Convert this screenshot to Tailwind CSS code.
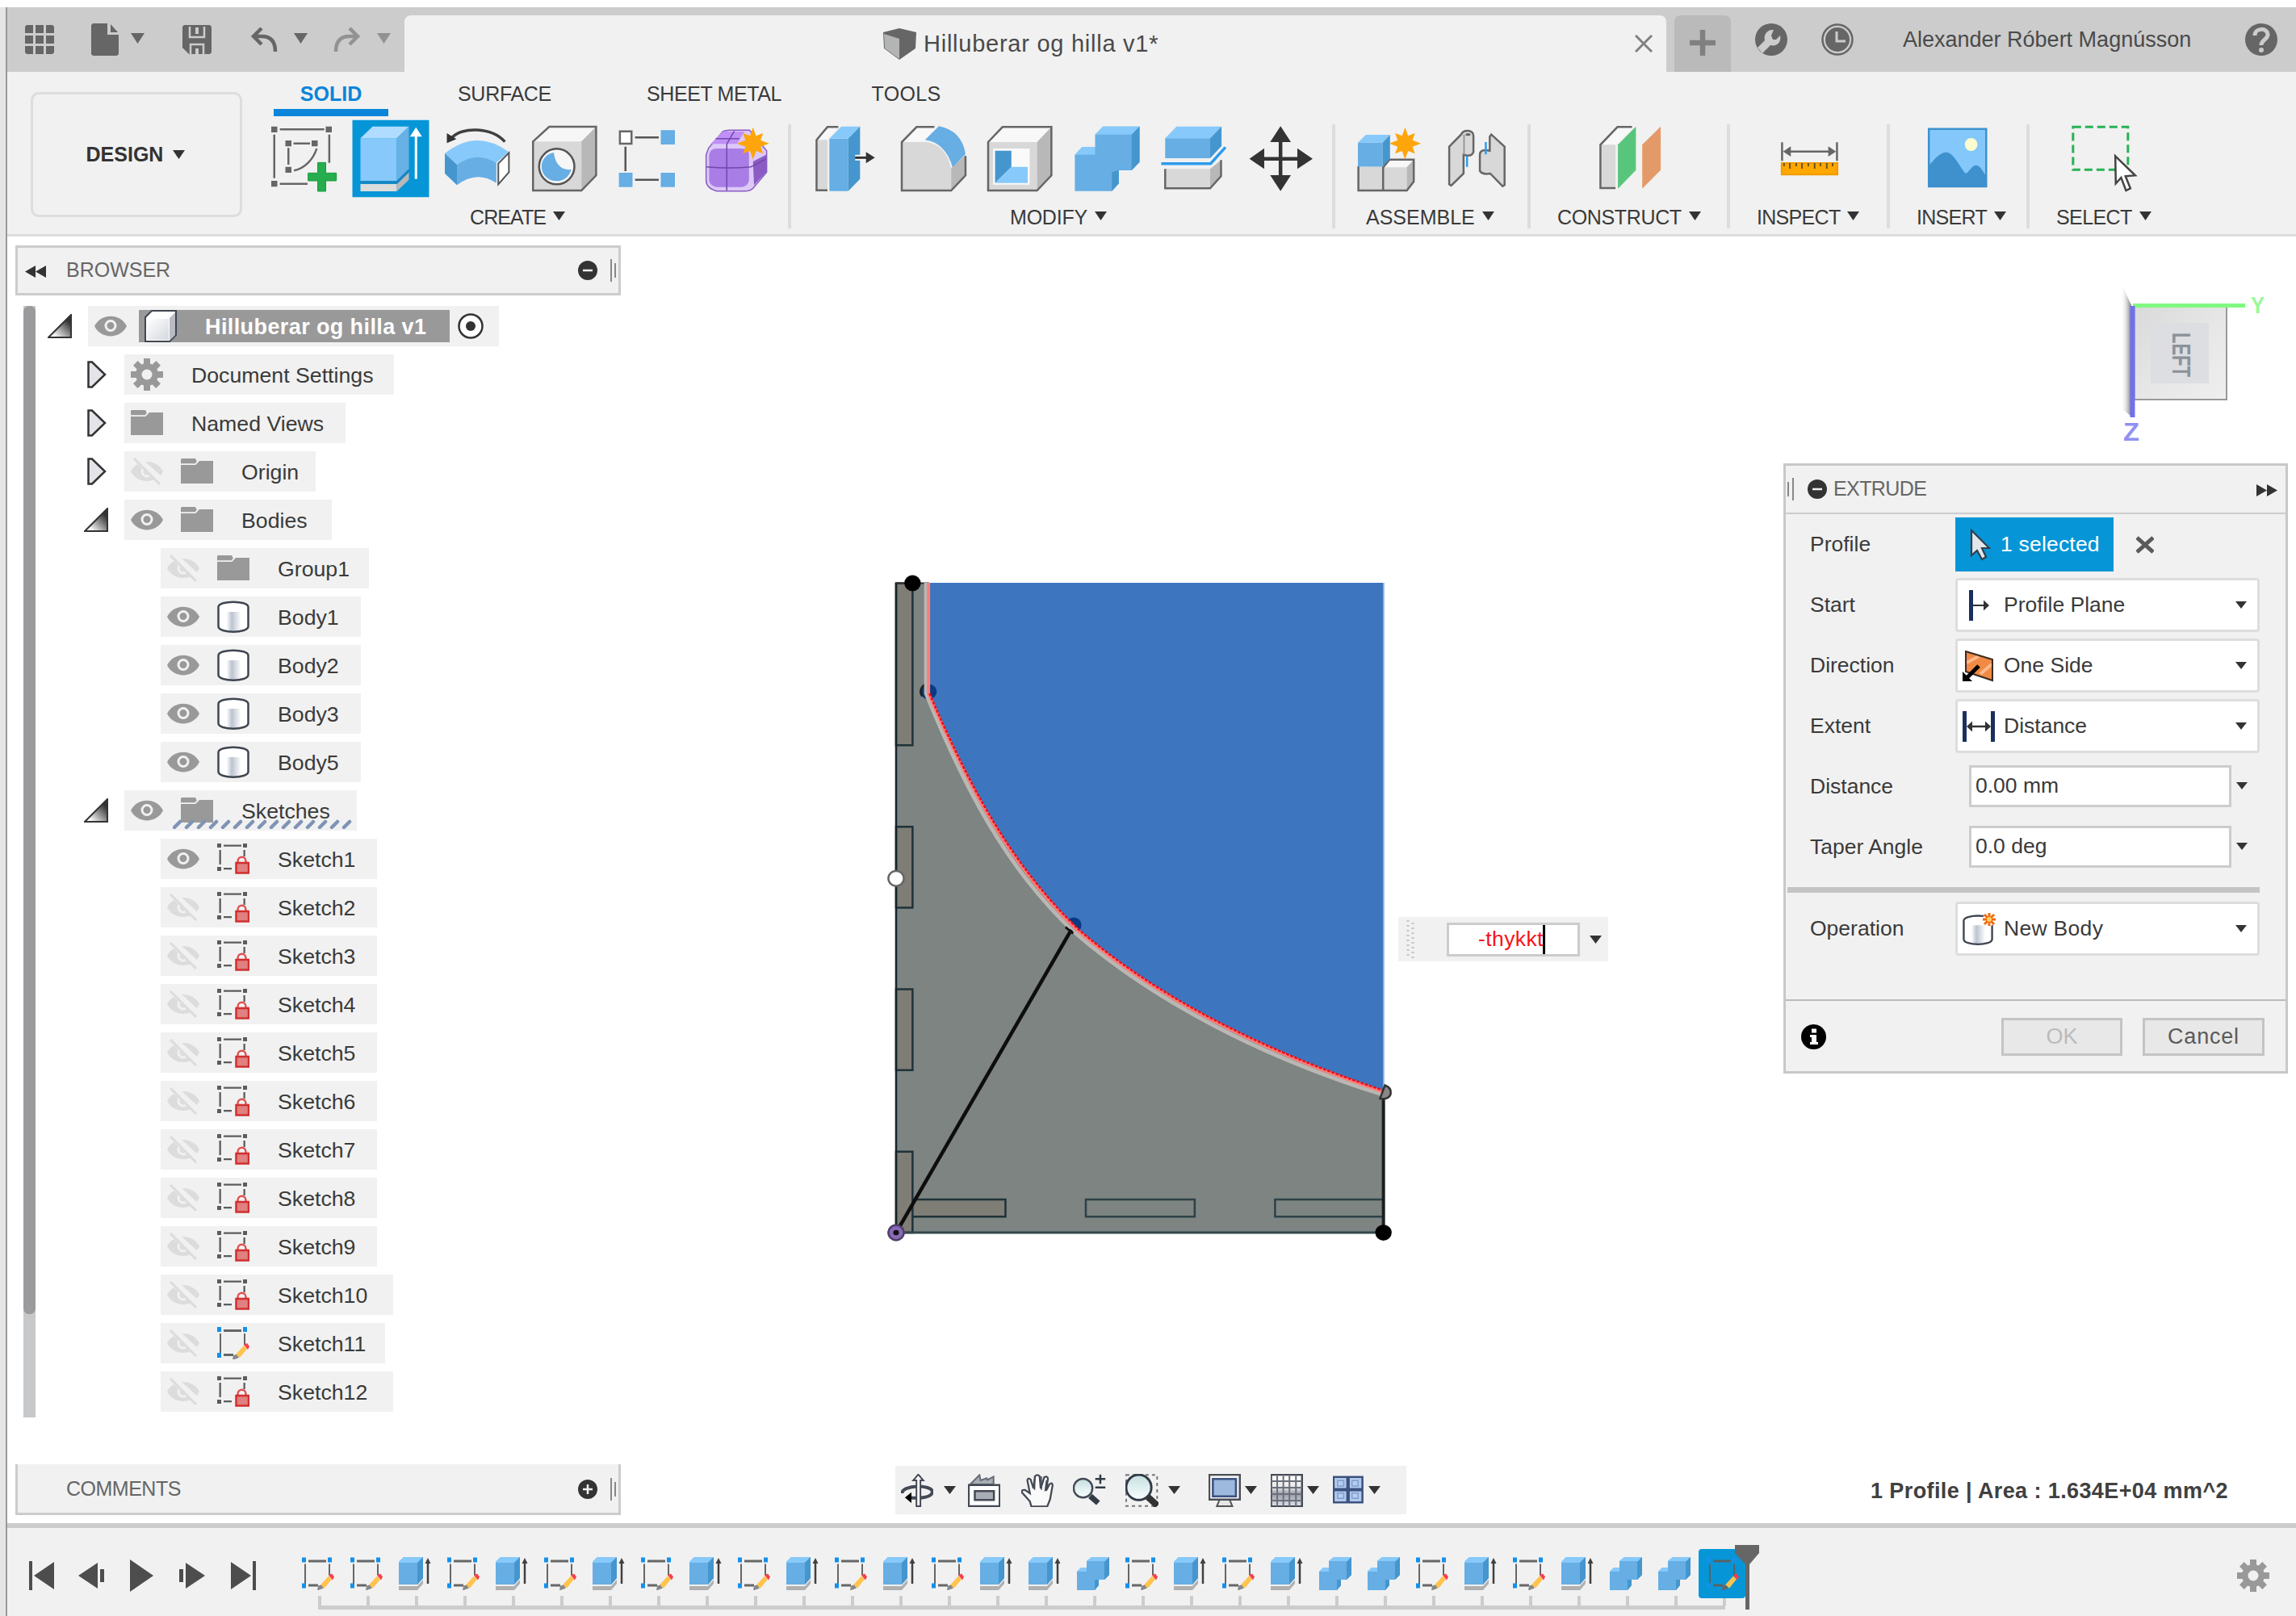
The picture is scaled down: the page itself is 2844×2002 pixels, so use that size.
<!DOCTYPE html>
<html lang="en">
<head>
<meta charset="utf-8">
<title>Hilluberar og hilla v1*</title>
<script src="https://cdn.jsdelivr.net/npm/@tailwindcss/browser@4"></script>
</head>
<body class="w-[2844px] h-[2002px] overflow-hidden bg-white font-['Liberation_Sans',Arial,sans-serif] text-[#3a3a3a] pt-[9px] flex">

<!-- Shared symbols -->
<svg class="absolute w-0 h-0" aria-hidden="true">
  <defs>
    <linearGradient id="gTri" x1="0" y1="1" x2="1" y2="0"><stop offset="0.15" stop-color="#fff"/><stop offset="0.8" stop-color="#333"/></linearGradient>
    <linearGradient id="gCyl"><stop offset="0" stop-color="#fff"/><stop offset=".1" stop-color="#fff"/><stop offset=".35" stop-color="#bcc3d0"/><stop offset=".8" stop-color="#fff"/></linearGradient>
    <linearGradient id="gCube" x1="0" y1="0" x2="1" y2="1"><stop offset="0" stop-color="#fff"/><stop offset="1" stop-color="#d5d8de"/></linearGradient>
    <linearGradient id="gLens" x1="0" y1="0" x2="0" y2="1"><stop offset="0" stop-color="#c5dfe0"/><stop offset="1" stop-color="#fafefe"/></linearGradient>
    <linearGradient id="gGrid" x1="0" y1="0" x2="0" y2="1"><stop offset="0" stop-color="#fff"/><stop offset=".4" stop-color="#e8e8e8"/><stop offset=".6" stop-color="#9a9da8"/><stop offset="1" stop-color="#dfe3ee"/></linearGradient>
    <linearGradient id="gShade"><stop offset="0" stop-color="#fff" stop-opacity="0"/><stop offset="1" stop-color="#7c7c7c"/></linearGradient>
    <linearGradient id="gView" x1="0" y1="0" x2="1" y2="1"><stop offset="0" stop-color="#d9d9d9"/><stop offset=".5" stop-color="#e6e6e6"/><stop offset="1" stop-color="#efefef"/></linearGradient>
  </defs>
  <symbol id="caret" viewBox="0 0 15 11" preserveAspectRatio="none"><path d="M0 0h15L7.500 11z" fill="currentColor"/></symbol>
  <symbol id="eye" viewBox="0 0 40 26"><path d="M0 13C8-3.500 32-3.500 40 13C32 29.500 8 29.500 0 13z" fill="#999"/><circle cx="20" cy="12.500" r="6" fill="#999" stroke="#f1f1f1" stroke-width="3"/></symbol>
  <symbol id="eyeoff" viewBox="0 0 40 34"><path d="M0 17C8 1 32 1 40 17C32 33 8 33 0 17z" fill="#dcdcdc"/><circle cx="20" cy="17" r="6" fill="#dcdcdc" stroke="#f1f1f1" stroke-width="3"/><path d="M6 0L40 31" stroke="#f1f1f1" stroke-width="9"/><path d="M4 1L36 33" stroke="#dcdcdc" stroke-width="3"/></symbol>
  <symbol id="folder" viewBox="0 0 40 34"><path d="M1 1h17l2 4-2 3H0V2z" fill="#999"/><path d="M0 9h18l5-5h17v28H0z" fill="#999"/><path d="M0 8h18l5-6" stroke="#f1f1f1" stroke-width="1.500" fill="none"/></symbol>
  <symbol id="gear" viewBox="-20 -20 40 40"><g fill="#999"><circle r="14"/><g id="teeth"><rect x="-4" y="-20" width="8" height="40"/><rect x="-20" y="-4" width="40" height="8"/></g><use href="#teeth" transform="rotate(45)"/></g><circle r="6.500" fill="#f1f1f1"/></symbol>
  <symbol id="cyl" viewBox="0 0 40 40"><path d="M1.500 8C1.500-.5 38.500-.5 38.500 8V32C38.500 41 1.500 41 1.500 32z" fill="#fff"/><path d="M9 14h26v22C28 39 15 39 9 36z" fill="url(#gCyl)"/><path d="M1.500 8C1.500-.5 38.500-.5 38.500 8V32C38.500 41 1.500 41 1.500 32z" fill="none" stroke="#3f4650" stroke-width="2.500"/></symbol>
  <symbol id="cube" viewBox="0 0 40 40"><path d="M1 9L9 1H39V31L31 39H1z" fill="#fff" stroke="#3f4650" stroke-width="2"/><path d="M3 11H30V37H3z" fill="url(#gCube)"/><path d="M31 10L38 3V31L31 38z" fill="#b9bcc4"/></symbol>
  <symbol id="sklock" viewBox="0 0 40 38"><g fill="#5c5c5c"><path d="M0 0h5v5H0zM32 0h5v5h-5zM0 29h5v5H0zM8 1.500h22v2.300H8zM2.500 8h2.300v18H2.500zM32.500 8h2.300v8h-2.300zM8 30h10v2.300H8z"/></g><path d="M25.500 25v-3c0-7 10-7 10 0v3" fill="none" stroke="#e05050" stroke-width="2.500"/><rect x="23.500" y="24" width="15.500" height="12.500" fill="#e08080" stroke="#d22f2f" stroke-width="2.500"/></symbol>
  <symbol id="sketch" viewBox="0 0 40 40"><path d="M8 3h22v3H8zM3 8h2v25H3zM33 8h2v14h-2zM8 33h12v3H8z" fill="#666"/><path d="M0 0h5v6H0zM32 0h5v6h-5zM0 32h5v6H0z" fill="#1490ea"/><path d="M23 34L33 23l4 4L28 38z" fill="#ffc34e"/><path d="M33 22l4-2 3 4-2 4z" fill="#f5404a"/><path d="M19 41l1-6 4-1 3 4z" fill="#888"/></symbol>
  <symbol id="sketchsel" viewBox="0 0 40 40"><path d="M8 3h22v3H8zM3 8h2v25H3zM33 8h2v14h-2zM8 33h12v3H8z" fill="#5a6266"/><path d="M0 0h5v6H0zM32 0h5v6h-5zM0 32h5v6H0z" fill="#1490ea"/><path d="M23 34L33 23l4 4L28 38z" fill="#ffc34e"/><path d="M33 22l4-2 3 4-2 4z" fill="#f5404a"/><path d="M19 41l1-6 4-1 3 4z" fill="#666"/></symbol>
  <symbol id="extrude" viewBox="0 0 40 41"><path d="M0 36h23l7-8v5l-7 8H0z" fill="#b0b0b0"/><path d="M0 6L6 0H30V26L23 34H0z" fill="#66aee4"/><path d="M0 6L6 0H30L23 7H0z" fill="#87c9fa"/><path d="M23 7L30 0V26L23 34z" fill="#4596ce"/><path d="M36 33V5" stroke="#404040" stroke-width="2.500"/><path d="M32.500 8L36 1l3.500 7z" fill="#404040"/></symbol>
  <symbol id="combine" viewBox="0 0 40 41"><path d="M0 18L5 13H12V5L18 0H40V22L34 28H27V35L22 41H0z" fill="#66aee4"/><path d="M0 18L5 13H12V18zM12 5L18 0H40L35 5z" fill="#87c9fa"/><path d="M35 5L40 0V22L34 28V6zM22 28H27V35L22 41z" fill="#4596ce"/></symbol>
  <symbol id="open" viewBox="0 0 30 30"><path d="M1 29L29 1V29z" fill="url(#gTri)" stroke="#333" stroke-width="2"/></symbol>
  <symbol id="closed" viewBox="0 0 24 34"><path d="M1.500 1.500H6L22 17L6 32.500H1.500z" fill="#e4e4e8" stroke="#333" stroke-width="2.500"/></symbol>
  <symbol id="star" viewBox="-32 -60 64 120" overflow="visible"><path d="M0-60L6-28 20-38 15-12 32 0 15 12 20 38 6 28 0 60-6 28-20 38-15 12-32 0-15-12-20-38-6-28z" fill="#fda50a"/></symbol>
</svg>

<!-- Window edge -->
<div class="w-[9px] h-full shrink-0 bg-[#e5e5e5] border-r-2 border-[#999]"></div>

<div class="w-[2835px] h-[1993px] flex flex-col">

  <!-- Title bar -->
  <header class="h-20 shrink-0 bg-[#ccc] flex text-[#666]">
    <div class="w-[492px] flex items-center pl-[22px]">
      <svg class="w-9 h-9" viewBox="0 0 36 36" fill="currentColor"><path d="M2 0h8v10H0V2zM13 0h10v10H13zM26 0h8l2 2v8H26zM0 13h10v10H0zM13 13h10v10H13zM26 13h10v10H26zM0 26h10v10H2l-2-2zM13 26h10v10H13zM26 26h10v8l-2 2h-8z"/></svg>
      <svg class="w-[34px] h-10 ml-[46px]" viewBox="0 0 34 40" fill="currentColor"><path d="M2 0H20V14H34V38L32 40H2L0 38V2zM24 1L33 11H24z"/></svg>
      <svg class="w-[17px] h-[13px] ml-[15px] -mt-1"><use href="#caret"/></svg>
      <svg class="w-9 h-9 ml-[47px]" viewBox="0 0 36 36"><path d="M2 0H34L36 2V34L34 36H8L0 28V2z" fill="#666"/><path d="M9 2v13h18V2M10 36V24H26V36" fill="none" stroke="#ccc" stroke-width="2.500"/><path d="M16 29h4v7h-4zM16 3h4v8h-4z" fill="#ccc"/></svg>
      <svg class="w-[34px] h-[30px] ml-12" viewBox="0 0 34 30"><path d="M14 1L4 11L14 21M4 11H14C26 11 31 18 31 30" fill="none" stroke="#666" stroke-width="4.500"/></svg>
      <svg class="w-[17px] h-[13px] ml-5 -mt-1"><use href="#caret"/></svg>
      <svg class="w-[34px] h-[30px] ml-8" viewBox="0 0 34 30"><path d="M20 1L30 11L20 21M30 11H20C8 11 3 18 3 30" fill="none" stroke="#929292" stroke-width="4.500"/></svg>
      <svg class="w-[17px] h-[13px] ml-5 -mt-1 text-[#929292]"><use href="#caret"/></svg>
    </div>
    <div class="w-[1563px] mt-[10px] rounded-t-[8px] bg-[#f1f1f1] flex items-center">
      <svg class="w-[41px] h-[39px] ml-[593px]" viewBox="0 0 41 39"><path d="M0 5L20 0L41 5L40 25L20 39L1 25z" fill="#666"/><path d="M1 7L20 13V38L2 25z" fill="#b3b5b5"/></svg>
      <span class="ml-[9px] mt-[2px] text-[29px] tracking-[0.75px] text-[#4a4a4a] whitespace-nowrap w-[300px]">Hilluberar og hilla v1*</span>
      <svg class="w-[22px] h-[22px] ml-[581px]" viewBox="0 0 22 22"><path d="M1 1L21 21M21 1L1 21" stroke="#808080" stroke-width="3"/></svg>
    </div>
    <div class="w-[70px] ml-[10px] mt-[10px] rounded-t-[8px] bg-[#bababa] flex items-center justify-center">
      <svg class="w-8 h-8 -mt-[2px]" viewBox="0 0 32 32"><path d="M16 0V32M0 16H32" stroke="#808080" stroke-width="6.500"/></svg>
    </div>
    <div class="flex items-center">
      <svg class="w-10 h-10 ml-[30px]" viewBox="0 0 40 40"><circle cx="20" cy="20" r="20" fill="#666"/><path d="M3 30L12 21C10 13 16 7 23 8L20 15L22 20L26 20L31 15C33 23 27 29 19 27L9 37z" fill="#ccc"/></svg>
      <svg class="w-10 h-10 ml-[42px]" viewBox="0 0 40 40"><circle cx="20" cy="20" r="18.500" fill="none" stroke="#666" stroke-width="2.500"/><circle cx="20" cy="20" r="15" fill="#666"/><path d="M19 10V22H30" fill="none" stroke="#ccc" stroke-width="3"/></svg>
      <span class="ml-[61px] text-[27px] text-[#4a4a4a] whitespace-nowrap w-[363px]">Alexander Róbert Magnússon</span>
      <svg class="w-10 h-10 ml-[61px]" viewBox="0 0 40 40"><circle cx="20" cy="20" r="20" fill="#666"/><path d="M12 15C12 5 28 5 28 14C28 20 20 20 20 27" fill="none" stroke="#ccc" stroke-width="5"/><circle cx="20" cy="33" r="3" fill="#ccc"/></svg>
    </div>
  </header>

  <!-- Ribbon -->
  <section class="h-[204px] shrink-0 bg-[#f1f1f1] border-b-[3px] border-[#ddd] flex">
    <div class="ml-[29px] mt-[25px] w-[262px] h-[155px] rounded-[10px] border-[3px] border-[#ddd] flex items-center justify-center text-[#333]">
      <span class="text-[25px] font-bold -ml-[2px]">DESIGN</span>
      <svg class="w-[15px] h-[11px] ml-[12px]"><use href="#caret"/></svg>
    </div>
    <div class="flex-1 flex flex-col">
      <nav class="flex h-[55px] text-[25px] leading-[36px] text-center">
        <div class="w-[142px] ml-[39px] pt-[9px] border-b-[9px] border-[#0a85d9] text-[#0a85d9] font-bold">SOLID</div>
        <div class="w-[180px] ml-[54px] pt-[9px] tracking-[-0.3px]">SURFACE</div>
        <div class="w-[201px] ml-[69px] pt-[9px] tracking-[-0.4px]">SHEET METAL</div>
        <div class="w-[141px] ml-[67px] pt-[9px] tracking-[0.3px]">TOOLS</div>
      </nav>
      <div class="flex mt-[10px] h-[129px] text-[25px] [&_svg_*]:[vector-effect:non-scaling-stroke]">

        <div class="w-[680px] border-r-4 border-[#ddd] pt-[2px]">
          <div class="flex gap-[27.5px] pl-9">
            <svg class="w-20 h-[81px] overflow-visible" viewBox="538 468 128 243" preserveAspectRatio="none" fill="none" stroke="#666" stroke-width="2.500"><path d="M555 481H643M544 500V662M653 500V605M555 683H610M582 533H615M572 550V612M628 552C622 590 605 625 583 634"/><path d="M538 470h12v22h-12zM646 470h12v22h-12zM566 522h12v22h-12zM618 522h12v22h-12zM566 620h12v22h-12zM538 672h12v22h-12z" fill="#666" stroke="none"/><path d="M630 604h16v39h21v29h-21v39h-16v-39h-19v-29h19z" fill="#25ad4e" stroke="#1d9a42" stroke-width="1"/></svg>
            <svg class="w-20 h-[81px] overflow-visible" viewBox="710 468 128 243" preserveAspectRatio="none"><path d="M698 446h152v287H698z" fill="#0696d7"/><path d="M714 514h72v158h-72z" fill="#87c9fa"/><path d="M714 514L738 470H810L786 514z" fill="#afdcff"/><path d="M786 514L810 470V628L786 672z" fill="#69b0e5"/><path d="M714 684h72v27h-72z" fill="#dcdcdc"/><path d="M786 684L810 640V668L786 711z" fill="#b8b8b8"/><path d="M714 678H786L810 634" fill="none" stroke="#1a84c0" stroke-width="3"/><path d="M824 500V665" stroke="#fff" stroke-width="3"/><path d="M824 473L836 508H812z" fill="#fff"/></svg>
            <svg class="w-20 h-[81px] overflow-visible" viewBox="882 468 128 243" preserveAspectRatio="none"><path d="M1001 527C975 472 915 470 896 512" fill="none" stroke="#404040" stroke-width="3.500"/><path d="M886 532L886 495L905 517z" fill="#333"/><path d="M882 570Q945 476 1009 565L984 605Q945 562 906 612z" fill="#87c9fa"/><path d="M906 612Q945 560 984 605V680Q945 632 906 688z" fill="#66aee4"/><path d="M882 570L906 612V688L882 645z" fill="#4596ce"/><path d="M1009 568V640L988 685V608z" fill="#fff" stroke="#555" stroke-width="2"/></svg>
            <svg class="w-20 h-[81px] overflow-visible" viewBox="1054 468 128 243" preserveAspectRatio="none"><path d="M1056 526L1088 471H1181L1152 526z" fill="#f6f6f6"/><path d="M1056 526h96v182h-96z" fill="#d8d8d8"/><path d="M1152 526L1181 471V652L1152 708z" fill="#b8b8b8"/><path d="M1056 526L1088 471H1181V652L1152 708H1056z" fill="none" stroke="#666" stroke-width="2.500"/><ellipse cx="1103" cy="619" rx="35" ry="66" fill="#f6f6f6" stroke="#555" stroke-width="2.500"/><path d="M1097 567C1100 610 1112 634 1132 630C1127 660 1115 673 1103 673C1085 673 1073 650 1073 619C1073 590 1085 570 1097 567z" fill="#66aee4"/></svg>
            <svg class="w-20 h-[81px] overflow-visible" viewBox="1226 468 128 243" preserveAspectRatio="none"><path d="M1229 488h23v46h-23z" fill="#fff" stroke="#666" stroke-width="2.500"/><path d="M1310 484h28v53h-28zM1227 642h27v53h-27zM1310 642h28v53h-28z" fill="#66aee4"/><path d="M1259 511H1306M1240 545V636M1259 668H1306" stroke="#555" stroke-width="2.500"/></svg>
            <svg class="w-20 h-[81px] overflow-visible" viewBox="1398 468 128 243" preserveAspectRatio="none"><path d="M1399 575L1404 550L1432 489Q1437 484 1445 484H1485L1519 560V640L1492 700Q1487 710 1478 710H1420Q1399 700 1399 670z" fill="#dcc8f7" stroke="#8a5cc4" stroke-width="1.500"/><path d="M1408 535L1432 489H1475L1460 535z" fill="#c08ff8"/><path d="M1405 575Q1407 552 1420 552H1470Q1484 555 1484 575V670Q1482 693 1470 695H1420Q1407 692 1405 670z" fill="#a97de6"/><path d="M1492 600L1518 575V640L1494 688z" fill="#8a5cc4"/><path d="M1440 535V708M1400 620Q1445 628 1488 620L1518 590M1418 515H1465M1440 535L1455 487" fill="none" stroke="#7347ac" stroke-width="1.500"/><use href="#star" x="1460" y="473" width="64" height="120"/></svg>
          </div>
          <div class="flex items-center pl-[282px] mt-[14px]"><span class="tracking-[-0.9px]">CREATE</span><svg class="w-[15px] h-[11px] ml-[9px] -mt-1 text-[#333]"><use href="#caret"/></svg></div>
        </div>

        <div class="w-[674px] border-r-4 border-[#ddd] pt-[2px]">
          <div class="flex gap-[27.5px] pl-[29px]">
            <svg class="w-20 h-[81px] overflow-visible" viewBox="82 468 130.7 243" preserveAspectRatio="none"><path d="M86 520L108 472H130L108 520z" fill="#f8f8f8"/><path d="M86 520h22v187H86z" fill="#d8d8d8"/><path d="M130 472H108L86 520V707H108" fill="none" stroke="#666" stroke-width="2.500"/><path d="M112 515h38v195h-38z" fill="#66aee4"/><path d="M112 515L136 470H174L150 515z" fill="#87c9fa"/><path d="M150 515L174 470V665L150 710z" fill="#4596ce"/><path d="M164 586H192" stroke="#f8f8f8" stroke-width="7"/><path d="M164 586H192" stroke="#333" stroke-width="3"/><path d="M186 565L204 586L186 607z" fill="#333"/></svg>
            <svg class="w-20 h-[81px] overflow-visible" viewBox="257 468 130.7 243" preserveAspectRatio="none"><path d="M257 528L287 472H335L305 525z" fill="#f8f8f8"/><path d="M257 528H305Q345 535 357 625V708H257z" fill="#d8d8d8"/><path d="M357 625L386 575V652L357 708z" fill="#b8b8b8"/><path d="M323 472H287L257 528V708H357L386 652V580" fill="none" stroke="#666" stroke-width="2.500"/><path d="M304 520L332 469Q378 485 386 572L360 622Q345 530 304 520z" fill="#66aee4"/></svg>
            <svg class="w-20 h-[81px] overflow-visible" viewBox="433 468 130.7 243" preserveAspectRatio="none"><path d="M433 528L462 472H561L532 528z" fill="#f8f8f8"/><path d="M433 528h99v180h-99z" fill="#d8d8d8"/><path d="M532 528L561 472V652L532 708z" fill="#b8b8b8"/><path d="M433 528L462 472H561V652L532 708H433z" fill="none" stroke="#666" stroke-width="2.500"/><path d="M443 552h74v134h-74z" fill="#fafafa"/><path d="M447 560h33v60L447 680z" fill="#4596ce"/><path d="M480 620H513V680H447z" fill="#87c9fa"/></svg>
            <svg class="w-20 h-[81px] overflow-visible" viewBox="608 468 130.7 243" preserveAspectRatio="none"><path d="M607 575L622 546H648V500L664 470H738V602L722 633H696V682L682 710H607z" fill="#66aee4"/><path d="M607 575L622 546H648V575zM648 500L664 470H738L722 500z" fill="#87c9fa"/><path d="M722 500L738 470V602L722 633zM682 640L696 633V682L682 710z" fill="#4596ce"/></svg>
            <svg class="w-20 h-[81px] overflow-visible" viewBox="784 468 130.7 243" preserveAspectRatio="none"><path d="M791 514L814 470H905L882 514z" fill="#87c9fa"/><path d="M791 514h91v74h-91z" fill="#66aee4"/><path d="M882 514L905 470V543L882 588z" fill="#4596ce"/><path d="M783 608H883L913 547" fill="none" stroke="#2c9cec" stroke-width="3.500"/><path d="M791 628h91v72h-91z" fill="#d8d8d8"/><path d="M882 628L904 595V655L882 700z" fill="#b8b8b8"/><path d="M791 628V700H882L904 655V595" fill="none" stroke="#666" stroke-width="2.500"/></svg>
            <svg class="w-20 h-[81px] overflow-visible" viewBox="959 468 130.7 243" preserveAspectRatio="none"><path d="M1023 500V680M985 590H1062" stroke="#333" stroke-width="4.500"/><path d="M1023 469L1044 528H1002zM1023 710L1044 651H1002zM960 590L990 551V628zM1088 590L1057 551V628z" fill="#333"/></svg>
          </div>
          <div class="flex items-center pl-[271px] mt-[14px]"><span class="tracking-[-0.2px]">MODIFY</span><svg class="w-[15px] h-[11px] ml-[9px] -mt-1 text-[#333]"><use href="#caret"/></svg></div>
        </div>

        <div class="w-[242px] border-r-4 border-[#ddd] pt-[2px]">
          <div class="flex gap-[27px] pl-7">
            <svg class="w-20 h-[81px] overflow-visible" viewBox="1179 468 130.7 243" preserveAspectRatio="none"><path d="M1180 618h50v90h-50zM1230 620h48v88h-48z" fill="#d8d8d8"/><path d="M1230 622L1243 593H1292L1278 622z" fill="#f8f8f8"/><path d="M1278 622L1292 593V675L1278 708z" fill="#b8b8b8"/><path d="M1180 618V708H1278L1292 675V593H1243L1230 622V708" fill="none" stroke="#666" stroke-width="2.500"/><path d="M1179 530h50v89h-50z" fill="#66aee4"/><path d="M1179 530L1195 501H1244L1229 530z" fill="#87c9fa"/><path d="M1229 530L1244 501V590L1229 619z" fill="#4596ce"/><use href="#star" x="1242" y="473" width="65" height="120"/></svg>
            <svg class="w-20 h-[81px] overflow-visible" viewBox="1354 468 130.7 243" preserveAspectRatio="none"><g stroke="#666" stroke-width="2.500"><path d="M1364 545L1388 500Q1392 485 1402 486Q1413 488 1413 505V565Q1410 580 1400 578L1393 575V645L1368 690L1364 685z" fill="#d8d8d8"/><path d="M1476 545L1449 500L1446 508V560Q1426 552 1426 575V635Q1430 650 1447 645L1472 692L1476 688z" fill="#d8d8d8"/></g><path d="M1394 500V575" stroke="#999" stroke-width="2"/><path d="M1400 580V620M1438 528V574" stroke="#2c9cec" stroke-width="2.500"/><ellipse cx="1402" cy="500" rx="5" ry="5" fill="#666"/></svg>
          </div>
          <div class="flex items-center pl-[38px] mt-[14px]"><span>ASSEMBLE</span><svg class="w-[15px] h-[11px] ml-[9px] -mt-1 text-[#333]"><use href="#caret"/></svg></div>
        </div>

        <div class="w-[247px] border-r-4 border-[#ddd] pt-[2px]">
          <div class="flex pl-[84px]">
            <svg class="w-20 h-[81px] overflow-visible" viewBox="133 468 132.9 243" preserveAspectRatio="none"><path d="M137 538L172 472H205L170 538z" fill="#f8f8f8"/><path d="M137 538h31v162h-31z" fill="#d8d8d8"/><path d="M202 472H172L137 538V699H168" fill="none" stroke="#666" stroke-width="2.500"/><path d="M173 538L210 470V632L173 701z" fill="#58c57c"/><path d="M223 538L261 470V632L223 701z" fill="#e49a68"/></svg>
          </div>
          <div class="flex items-center pl-[33px] mt-[14px]"><span class="tracking-[-0.35px]">CONSTRUCT</span><svg class="w-[15px] h-[11px] ml-[9px] -mt-1 text-[#333]"><use href="#caret"/></svg></div>
        </div>

        <div class="w-[198px] border-r-4 border-[#ddd] pt-[2px]">
          <div class="flex pl-[59px]">
            <svg class="w-20 h-[81px] overflow-visible" viewBox="502 468 132.9 243" preserveAspectRatio="none"><path d="M511 529V598M624 529V598M520 563H615" stroke="#666" stroke-width="2.500"/><path d="M513 563L529 544V582zM622 563L606 544V582z" fill="#666"/><path d="M510 606h115v43h-115z" fill="#ffa800" stroke="#f09a00" stroke-width="2"/><path d="M515 606V618M527 606V627M540 606V618M552 606V627M565 606V618M578 606V627M590 606V618M603 606V627M615 606V618" stroke="#6b5320" stroke-width="2"/></svg>
          </div>
          <div class="flex items-center pl-[33px] mt-[14px]"><span class="tracking-[-0.7px]">INSPECT</span><svg class="w-[15px] h-[11px] ml-[9px] -mt-1 text-[#333]"><use href="#caret"/></svg></div>
        </div>

        <div class="w-[173px] border-r-4 border-[#ddd] pt-[2px]">
          <div class="flex pl-11">
            <svg class="w-20 h-[81px] overflow-visible" viewBox="806 468 132.9 243" preserveAspectRatio="none"><path d="M813 479h118v214H813z" fill="#84c8fb"/><ellipse cx="900" cy="537" rx="13" ry="24" fill="#fdfbd0"/><path d="M813 616C825 590 836 566 849 566C864 566 878 625 889 645C898 635 902 614 910 614C918 614 924 635 931 655V693H813z" fill="#3e91cd"/><path d="M813 479h118v214H813z" fill="none" stroke="#3e91cd" stroke-width="2.500"/></svg>
          </div>
          <div class="flex items-center pl-[33px] mt-[14px]"><span class="tracking-[-0.7px]">INSERT</span><svg class="w-[15px] h-[11px] ml-[9px] -mt-1 text-[#333]"><use href="#caret"/></svg></div>
        </div>

        <div class="pt-[2px]">
          <div class="flex pl-[52px]">
            <svg class="w-20 h-[81px] overflow-visible" viewBox="1106 468 132.9 243" preserveAspectRatio="none"><path d="M1109 472H1222V631H1109z" fill="none" stroke="#27b255" stroke-width="3" stroke-dasharray="10 5"/><path d="M1196 580L1237 652L1217 655L1227 700L1218 708L1208 660L1197 682z" fill="#fff" stroke="#444" stroke-width="2.500"/></svg>
          </div>
          <div class="flex items-center pl-[33px] mt-[14px]"><span class="tracking-[-0.6px]">SELECT</span><svg class="w-[15px] h-[11px] ml-[9px] -mt-1 text-[#333]"><use href="#caret"/></svg></div>
        </div>
      </div>
    </div>
  </section>

  <!-- Modelling canvas with its floating panels -->
  <main class="relative h-[1594px] shrink-0 bg-white">

    <div class="absolute left-[10px] top-[11px] w-[750px] h-[62px] bg-[#f1f1f1] border-[3px] border-[#ccc] flex items-center pl-[9px]">
      <svg class="w-[26px] h-[15px] mt-[3px]" viewBox="0 0 26 15" fill="#333"><path d="M0 7.500L13 0V15zM13 7.500L26 0V15z"/></svg>
      <span class="ml-[25px] text-[25px] text-[#666] w-[634px]">BROWSER</span>
      <svg class="w-6 h-6" viewBox="0 0 24 24"><circle cx="12" cy="12" r="12" fill="#333"/><path d="M6 12H18" stroke="#f1f1f1" stroke-width="2.500"/></svg>
      <div class="ml-[16px] w-[2px] h-7 bg-[#888]"></div><div class="ml-[3px] w-[2px] h-[18px] bg-[#888]"></div>
    </div>

    <div class="absolute left-5 top-[86px] flex">
      <div class="w-[15px] h-[1377px] bg-[#c7c8ca]"><div class="h-[1249px] rounded-[7px] bg-[#9b9b9d]"></div></div>
      <div id="tree" class="flex flex-col gap-[10px] text-[26.7px] leading-[50px] whitespace-nowrap"></div>
    </div>

    <div class="absolute left-[10px] top-[1521px] w-[750px] h-[63px] bg-[#f1f1f1] border-x-[3px] border-b-[3px] border-[#ccc] flex items-center pl-[60px] pt-[2px]">
      <span class="text-[25px] tracking-[-0.5px] text-[#666] w-[634px]">COMMENTS</span>
      <svg class="w-6 h-6" viewBox="0 0 24 24"><circle cx="12" cy="12" r="12" fill="#333"/><path d="M6 12H18M12 6V18" stroke="#f1f1f1" stroke-width="2.500"/></svg>
      <div class="ml-[16px] w-[2px] h-7 bg-[#888]"></div><div class="ml-[3px] w-[2px] h-[18px] bg-[#888]"></div>
    </div>

    <!-- Side bracket and selected profile -->
    <svg class="absolute left-[1071px] top-[407px] w-[940px] h-[860px] [&_*]:[vector-effect:non-scaling-stroke]" viewBox="0 0 1568 1568" preserveAspectRatio="none">
      <path d="M50 40H118V290C193 486 280 673 425 825C600 990 827 1106 1057 1190V1508H50z" fill="#7d8481"/>
      <g fill="#7e7d76" stroke="#1e3238" stroke-width="2.500"><path d="M50 41h34v366H50zM50 591h34v183H50zM50 958h34v183H50zM50 1325h34v183H50zM84 1433h192v39H84z"/></g>
      <path d="M442 1433h225v39H442zM1057 1433H833v39H1057" fill="none" stroke="#2c4248" stroke-width="2.500"/>
      <path d="M50 1508H1057" stroke="#33474c" stroke-width="3"/>
      <path d="M50 40V1508" stroke="#16252a" stroke-width="2.500"/>
      <path d="M50 41H118" stroke="#333" stroke-width="2"/>
      <path d="M1057 1190V1508" stroke="#1a1f20" stroke-width="4"/>
      <path d="M118 40H1057V1190C827 1106 600 990 425 825C280 673 193 486 118 290z" fill="#3e75bf"/>
      <path d="M1058 40V1185" stroke="#a9bfe0" stroke-width="1.500"/>
      <ellipse cx="117" cy="286" rx="17" ry="17" fill="#083a86"/><path d="M116 269A15 17 0 0 0 104 296" fill="none" stroke="#222" stroke-width="3"/>
      <ellipse cx="417" cy="813" rx="16" ry="17" fill="#083a86"/>
      <path d="M112 40V290C187 492 274 682 419 830C594 995 821 1116 1055 1196" fill="none" stroke="#b9b7b4" stroke-width="5"/>
      <path d="M117 40V290C193 486 280 673 425 825C600 990 827 1106 1057 1190" fill="none" stroke="#ff7d78" stroke-width="4"/>
      <path d="M119 290C195 484 282 671 427 823C602 988 829 1104 1058 1187" fill="none" stroke="#e8101c" stroke-width="2.500" stroke-dasharray="4 1.500"/>
      <path d="M50 1508L412 824" stroke="#0d0d0d" stroke-width="4.500"/><path d="M400 818L416 832" stroke="#111" stroke-width="3"/>
      <ellipse cx="84" cy="41" rx="17" ry="18" fill="#000"/><ellipse cx="1057" cy="1508" rx="17" ry="18" fill="#000"/>
      <ellipse cx="50" cy="708" rx="16" ry="17" fill="#fff" stroke="#666" stroke-width="2.500"/>
      <ellipse cx="50" cy="1508" rx="16" ry="17" fill="#8a68b8" stroke="#4d3f66" stroke-width="2.500"/><ellipse cx="50" cy="1508" rx="6" ry="6" fill="#111"/>
      <path d="M1060 1175Q1074 1180 1072 1195Q1068 1208 1050 1205z" fill="#888" stroke="#333" stroke-width="2.500"/>
    </svg>

    <!-- Distance entry next to the profile -->
    <div class="absolute left-[1723px] top-[843px] w-[260px] h-[55px] bg-[#f1f1f1] flex items-center">
      <svg class="ml-[10px] w-3 h-12" viewBox="0 0 12 48"><path d="M2 0V48M8 3V48" stroke="#c4c4c4" stroke-width="3" stroke-dasharray="2 4"/></svg>
      <div class="ml-[38px] w-[165px] h-[42px] bg-white border-[3px] border-[#ccc] flex items-center text-[26.500px] tracking-[0.4px] text-[#f8121c]"><span class="ml-[36px] whitespace-nowrap">-thykkt</span><span class="w-[3px] h-9 bg-black -ml-[1px]"></span></div>
      <svg class="w-[15px] h-[10px] ml-[12px] text-[#333]"><use href="#caret"/></svg>
    </div>

    <!-- View cube -->
    <svg class="absolute left-[2611px] top-[37px] w-[200px] h-[240px] overflow-visible font-bold" viewBox="2620 330 200 240">
      <path d="M2627 350L2640 378V516L2627 505z" fill="url(#gShade)"/>
      <path d="M2644 379H2758V495H2644z" fill="url(#gView)" stroke="#b5b5b5" stroke-width="1.500"/><path d="M2758 379V495H2644" fill="none" stroke="#999" stroke-width="2"/>
      <path d="M2664 400h72v75h-72z" fill="#dcdee1"/>
      <text transform="translate(2690 412) rotate(90)" font-size="31" textLength="55" lengthAdjust="spacingAndGlyphs" fill="#8d9298" dy="-1">LEFT</text>
      <path d="M2642 378.500H2781" stroke="#80f880" stroke-width="5"/><path d="M2641.500 379V517" stroke="#7070f0" stroke-width="6"/>
      <text x="2788" y="388" font-size="30" textLength="17" lengthAdjust="spacingAndGlyphs" fill="#98fa98">Y</text>
      <text x="2630" y="546" font-size="32" textLength="20" lengthAdjust="spacingAndGlyphs" fill="#9090f4">Z</text>
    </svg>

    <!-- Extrude dialog -->
    <section class="absolute left-[2200px] top-[281px] w-[625px] h-[756px] bg-[#f1f1f1] border-[3px] border-[#c8c8c8] text-[26.5px]">
      <div class="h-[60px] border-b-2 border-[#ccc] flex items-center pl-[2px]">
        <div class="w-[2px] h-[18px] bg-[#888]"></div><div class="ml-[4px] w-[2px] h-7 bg-[#888]"></div>
        <svg class="w-6 h-6 ml-[17px]" viewBox="0 0 24 24"><circle cx="12" cy="12" r="12" fill="#333"/><path d="M6 12H18" stroke="#f1f1f1" stroke-width="2.500"/></svg>
        <span class="ml-2 text-[25px] tracking-[-0.6px] text-[#666] w-[524px]">EXTRUDE</span>
        <svg class="w-[26px] h-[15px] mt-[3px]" viewBox="0 0 26 15" fill="#333"><path d="M26 7.500L13 0V15zM13 7.500L0 0V15z"/></svg>
      </div>
      <div class="pl-[30px] pt-[4px] grid grid-cols-[180px_377px] auto-rows-[67px] gap-y-2 items-center">
        <span>Profile</span>
        <div class="flex items-center">
          <div class="w-[196px] h-[67px] bg-[#0696d7] text-white flex items-center pl-[18px]"><svg class="w-[26px] h-[40px]" viewBox="0 0 26 40"><path d="M2 2V33L9 27L15 38L20 35L15 24H24z" fill="#e2e6ea" stroke="#30404e" stroke-width="2.200"/></svg><span class="ml-3 tracking-[0.2px] whitespace-nowrap">1 selected</span></div>
          <svg class="w-[22px] h-[22px] ml-[28px]" viewBox="0 0 22 22"><path d="M1 2L21 20M21 2L1 20" stroke="#5a5a5a" stroke-width="5"/></svg>
        </div>
        <span>Start</span>
        <div class="h-[67px] bg-white border-[3px] border-[#ddd] rounded-[4px] flex items-center pl-[6px]"><svg class="w-[42px] h-[38px]" viewBox="0 0 42 38"><path d="M8 0h5v38H8z" fill="#1b2f5e"/><path d="M13 19H30" stroke="#333" stroke-width="2"/><path d="M26 12.500L33 19L26 25.500z" fill="#333"/></svg><span class="ml-[9px] w-[287px]">Profile Plane</span><svg class="w-[14px] h-[9px] text-[#333]"><use href="#caret"/></svg></div>
        <span>Direction</span>
        <div class="h-[67px] bg-white border-[3px] border-[#ddd] rounded-[4px] flex items-center pl-[6px]"><svg class="w-[42px] h-[40px]" viewBox="0 0 42 40"><path d="M4 2L37 12V38L4 27z" fill="#f08a44"/><path d="M5 16L20 8M22 30L36 18" stroke="#ffb98a" stroke-width="4"/><path d="M4 2L37 12V38L4 27z" fill="none" stroke="#3c2a20" stroke-width="2"/><path d="M20 20L6 34" stroke="#000" stroke-width="5"/><path d="M0 39V27L12 39z" fill="#000"/></svg><span class="ml-[9px] w-[287px]">One Side</span><svg class="w-[14px] h-[9px] text-[#333]"><use href="#caret"/></svg></div>
        <span>Extent</span>
        <div class="h-[67px] bg-white border-[3px] border-[#ddd] rounded-[4px] flex items-center pl-[6px]"><svg class="w-[42px] h-[38px]" viewBox="0 0 42 38"><path d="M0 0h5v38H0zM35 0h5v38h-5z" fill="#1b2f5e"/><path d="M8 19H34" stroke="#333" stroke-width="2.500"/><path d="M5 19L12 12.500V25.500zM35 19L28 12.500V25.500z" fill="#333"/></svg><span class="ml-[9px] w-[287px]">Distance</span><svg class="w-[14px] h-[9px] text-[#333]"><use href="#caret"/></svg></div>
        <span>Distance</span>
        <div class="flex items-center pl-[17px] -mt-[2px]"><div class="w-[325px] h-[52px] bg-white border-[3px] border-[#ccc] pl-[5px] leading-[44px]">0.00 mm</div><svg class="w-[14px] h-[9px] ml-[6px] text-[#333]"><use href="#caret"/></svg></div>
        <span>Taper Angle</span>
        <div class="flex items-center pl-[17px] -mt-[2px]"><div class="w-[325px] h-[52px] bg-white border-[3px] border-[#ccc] pl-[5px] leading-[44px]">0.0 deg</div><svg class="w-[14px] h-[9px] ml-[6px] text-[#333]"><use href="#caret"/></svg></div>
      </div>
      <div class="mt-[16px] ml-[2px] w-[585px] h-[7px] bg-[#c4c4c4]"></div>
      <div class="pl-[30px] mt-[11px] grid grid-cols-[180px_377px] items-center">
        <span>Operation</span>
        <div class="h-[67px] bg-white border-[3px] border-[#ddd] rounded-[4px] flex items-center pl-[6px]"><svg class="w-[42px] h-[40px]" viewBox="0 0 42 40"><use href="#cyl" x="0" y="2" width="38" height="38"/><circle cx="33" cy="8" r="8" fill="#fff"/><path d="M33 0V16M25 8H41M27 2L39 14M39 2L27 14" stroke="#f06a10" stroke-width="3"/><circle cx="33" cy="8" r="3" fill="#ffd060"/></svg><span class="ml-[9px] w-[287px] tracking-[0.3px]">New Body</span><svg class="w-[14px] h-[9px] text-[#333]"><use href="#caret"/></svg></div>
      </div>
      <div class="mt-[54px] border-t-2 border-[#bbb] flex items-center pt-[21px] pl-[19px] text-[27px]">
        <svg class="w-[31px] h-[31px]" viewBox="0 0 31 31"><circle cx="15.500" cy="15.500" r="15.500" fill="#000"/><path d="M13 5.500h6v5h-6zM11 13h8v9h2v3H11v-3h2v-6h-2z" fill="#fff"/></svg>
        <div class="ml-[217px] w-[150px] h-[47px] bg-[#e8e8e8] border-[3px] border-[#c4c4c4] text-[#bbb] text-center leading-[41px]">OK</div>
        <div class="ml-[25px] w-[151px] h-[47px] bg-[#e8e8e8] border-[3px] border-[#c4c4c4] text-[#5a5a5a] text-center leading-[41px] tracking-[0.8px]">Cancel</div>
      </div>
    </section>

    <!-- Navigation bar -->
    <div class="absolute left-[1100px] top-[1523px] w-[633px] h-[60px] bg-[#f1f1f1] flex items-center pl-[7px] text-[#333] [&_svg_*]:[vector-effect:non-scaling-stroke]">
      <svg class="w-10 h-[41px]" viewBox="81 106 89.6 123" preserveAspectRatio="none"><path d="M84 178C84 145 168 145 168 172C168 195 130 198 104 194" fill="none" stroke="#444a55" stroke-width="4"/><path d="M124 226V130H115L129 108L143 130H135V226z" fill="#fff" stroke="#444a55" stroke-width="2"/><path d="M92 194L110 174V214z" fill="#000"/></svg>
      <svg class="w-[15px] h-[10px] ml-[13px]"><use href="#caret"/></svg>
      <svg class="w-10 h-[41px] ml-[15px]" viewBox="266 106 89.6 123" preserveAspectRatio="none"><path d="M272 145L298 110L301 130L318 122L320 128L337 116V145z" fill="#a8adb2" stroke="#666c75" stroke-width="2"/><path d="M268 147h86v79h-86z" fill="#fff" stroke="#444a55" stroke-width="2.500"/><path d="M285 170h53v33h-53z" fill="#a9adb5" stroke="#444a55" stroke-width="2.500"/></svg>
      <svg class="w-10 h-[41px] ml-[26px]" viewBox="414 106 89.6 123" preserveAspectRatio="none"><path d="M442 227L438 208L416 175Q414 163 425 166L438 178L431 130Q432 118 440 127L448 160L452 115Q459 105 465 115L468 160L478 118Q487 112 488 124L483 168L492 145Q500 135 501 148L494 200L486 227z" fill="#fafafa" stroke="#444a55" stroke-width="2.300"/><path d="M452 118L451 165M470 115V165M484 130L480 170" stroke="#444a55" stroke-width="1.500"/></svg>
      <svg class="w-[41px] h-[41px] ml-[24px]" viewBox="558 106 91.8 123" preserveAspectRatio="none"><path d="M606 188L628 214" stroke="#333b46" stroke-width="7"/><ellipse cx="586" cy="159" rx="26" ry="35" fill="url(#gLens)" stroke="#444a55" stroke-width="2.500"/><path d="M634 108V143M620 125H648M620 156H648" stroke="#333b46" stroke-width="2.500"/></svg>
      <svg class="w-[41px] h-[41px] ml-[24px]" viewBox="703 106 91.8 123" preserveAspectRatio="none"><path d="M705 110H791V225H705z" fill="none" stroke="#777" stroke-width="2" stroke-dasharray="4 4"/><path d="M764 190L792 224" stroke="#333" stroke-width="8"/><ellipse cx="740" cy="156" rx="35" ry="47" fill="url(#gLens)" stroke="#333b46" stroke-width="3"/></svg>
      <svg class="w-[15px] h-[10px] ml-[12px]"><use href="#caret"/></svg>
      <svg class="w-10 h-[41px] ml-[35px]" viewBox="934 106 89.6 123" preserveAspectRatio="none"><path d="M965 200L957 226H1000L992 200z" fill="#e6e6e6" stroke="#555" stroke-width="2"/><path d="M936 109h85v92h-85z" fill="#f4f4f4" stroke="#4a4e56" stroke-width="2.500"/><path d="M946 125h64v64h-64z" fill="#9db9de" stroke="#3b5280" stroke-width="2.500"/></svg>
      <svg class="w-[15px] h-[10px] ml-[5px]"><use href="#caret"/></svg>
      <svg class="w-10 h-[41px] ml-[17px]" viewBox="1108 106 89.6 123" preserveAspectRatio="none"><path d="M1109 109h86v118h-86z" fill="url(#gGrid)" stroke="#444a55" stroke-width="2.500"/><path d="M1126 109V227M1143 109V227M1160 109V227M1178 109V227M1109 133H1195M1109 157H1195M1109 181H1195M1109 205H1195" stroke="#6c707a" stroke-width="2"/></svg>
      <svg class="w-[15px] h-[10px] ml-[5px]"><use href="#caret"/></svg>
      <svg class="w-10 h-[41px] ml-[17px]" viewBox="1281 106 89.6 123" preserveAspectRatio="none"><path d="M1283 117h38v45h-38zM1325 117h38v45h-38zM1283 167h38v45h-38zM1325 167h38v45h-38z" fill="#b4caec" stroke="#3b5280" stroke-width="2.500"/><path d="M1294 131h17v20h-17zM1334 131h17v20h-17zM1294 177h17v20h-17zM1334 177h17v20h-17z" fill="#b6cdf0" stroke="#7f9fd2" stroke-width="1.500"/></svg>
      <svg class="w-[15px] h-[10px] ml-[4px]"><use href="#caret"/></svg>
    </div>

    <div class="absolute right-[84px] top-[1534px] text-[27px] font-bold tracking-[0.4px] text-[#404040] whitespace-nowrap">1 Profile | Area : 1.634E+04 mm^2</div>
  </main>

  <!-- Timeline -->
  <footer class="flex-1 bg-[#f1f1f1] border-t-[6px] border-[#ccc] flex">
    <div class="flex items-center h-[40px] mt-[39px] pl-[27px] w-[365px]">
      <svg class="w-[31px] h-9" viewBox="0 0 31 36" fill="#4d4d4d"><path d="M0 0h4v36H0zM6 18L31 1V35z"/></svg>
      <svg class="w-8 h-8 ml-[30px]" viewBox="0 0 32 32" fill="#4d4d4d"><path d="M0 16L24 0V32zM27 8h5v16h-5z"/></svg>
      <svg class="w-[29px] h-10 ml-8" viewBox="0 0 29 40" fill="#4d4d4d"><path d="M0 0L29 20L0 40z"/></svg>
      <svg class="w-8 h-8 ml-8" viewBox="0 0 32 32" fill="#4d4d4d"><path d="M32 16L8 0V32zM0 8h5v16H0z"/></svg>
      <svg class="w-[31px] h-9 ml-8" viewBox="0 0 31 36" fill="#4d4d4d"><path d="M27 0h4v36h-4zM25 18L0 1V35z"/></svg>
    </div>
    <div class="relative w-[1790px] pt-[26px]">
      <div id="timeline" class="flex"></div>
      <div class="ml-5 w-[1743px] h-[5px] bg-[#ccc]"></div>
      <svg class="absolute left-[1775px] top-[21px] w-[30px] h-20" viewBox="0 0 30 80"><path d="M0 0H30V10L18 24V80H13V24L0 10z" fill="#666"/></svg>
    </div>
    <svg class="w-10 h-10 mt-[39px] ml-[607px]"><use href="#gear"/></svg>
  </footer>
</div>

<script>
  // Browser tree: [indent level, arrow, visibility, icon, name, row width]
  const rows = [
    [1, 'closed', '', 'gear', 'Document Settings', 334],
    [1, 'closed', '', 'folder', 'Named Views', 274],
    [1, 'closed', 'eyeoff', 'folder', 'Origin', 237],
    [1, 'open', 'eye', 'folder', 'Bodies', 257],
    [2, '', 'eyeoff', 'folder', 'Group1', 258],
    [2, '', 'eye', 'cyl', 'Body1', 248],
    [2, '', 'eye', 'cyl', 'Body2', 248],
    [2, '', 'eye', 'cyl', 'Body3', 248],
    [2, '', 'eye', 'cyl', 'Body5', 248],
    [1, 'open', 'eye', 'folder', 'Sketches', 288]
  ];
  for (let i = 1; i <= 12; i++) rows.push([2, '', i === 1 ? 'eye' : 'eyeoff', i === 11 ? 'sketch' : 'sklock', 'Sketch' + i, i < 10 ? 268 : i === 11 ? 278 : 288]);

  const indent = { 1: 'w-[110px]', 2: 'w-[155px]' };
  const arrows = {
    open: '<svg class="w-[30px] h-[30px]"><use href="#open"/></svg>',
    closed: '<svg class="w-6 h-[34px] mr-[2px]"><use href="#closed"/></svg>',
    '': ''
  };
  let html = `<div class="flex h-[50px] items-center">
    <div class="w-[65px] flex justify-end pr-5">${arrows.open}</div>
    <div class="w-[509px] h-[50px] bg-[#f1f1f1] flex items-center pl-2">
      <svg class="w-10 h-[26px]"><use href="#eye"/></svg>
      <div class="ml-[15px] w-[385px] h-10 bg-[#999] flex items-center pl-[7px] text-white font-bold text-[27px] tracking-[0.4px]"><svg class="w-10 h-10"><use href="#cube"/></svg><span class="ml-[35px] mt-[2px]">Hilluberar og hilla v1</span></div>
      <svg class="w-8 h-8 ml-[10px]" viewBox="0 0 32 32"><circle cx="16" cy="16" r="14.500" fill="#fff" stroke="#333" stroke-width="2.500"/><circle cx="16" cy="16" r="6" fill="#333"/></svg>
    </div></div>`;
  for (const [lvl, arrow, eye, icon, name, w] of rows) {
    const eyeSvg = eye ? `<svg class="w-10 h-[34px] mr-[22px]"><use href="#${eye}"/></svg>` : '';
    const hatch = name === 'Sketches'
      ? '<svg class="absolute left-[60px] top-[36px] w-[222px] h-3" viewBox="0 0 222 12"><path d="M2 10l7-7m8 7l7-7m8 7l7-7m8 7l7-7m8 7l7-7m8 7l7-7m8 7l7-7m8 7l7-7m8 7l7-7m8 7l7-7m8 7l7-7m8 7l7-7m8 7l7-7m8 7l7-7m8 7l7-7" stroke="#7f93b5" stroke-width="4.500" stroke-linecap="round"/></svg>' : '';
    html += `<div class="flex h-[50px] items-center">
      <div class="${indent[lvl]} flex justify-end pr-5">${arrows[arrow]}</div>
      <div class="relative h-[50px] bg-[#f1f1f1] flex items-center pl-2" style="width:${w}px">${eyeSvg}<svg class="w-10 h-10"><use href="#${icon}"/></svg><span class="ml-[35px] mt-[1px]">${name}</span>${hatch}</div></div>`;
  }
  document.getElementById('tree').innerHTML = html;

  // Timeline features: s = sketch, e = extrude, c = combine
  const kinds = { s: 'sketch', e: 'extrude', c: 'combine' };
  const order = 'ssesesesesesesee' + 'cseseccsesecc' + 's';
  document.getElementById('timeline').innerHTML = [...order].map((k, i) => {
    const last = i === order.length - 1;
    const box = last ? 'w-[58px] h-[61px] -ml-[10px] pl-[10px] rounded-[4px] bg-[#0696d7] flex items-center' : 'w-10 h-[61px] flex items-center';
    return `<div class="w-[60px] shrink-0 h-[70px]"><div class="${box}"><svg class="w-10 h-[41px] overflow-visible"><use href="#${last ? 'sketchsel' : kinds[k]}"/></svg></div><div class="ml-5 ${last ? 'h-[9px]' : 'h-[12px] -mt-[3px]'} w-1 bg-[#ccc]"></div></div>`;
  }).join('');
</script>
</body>
</html>
